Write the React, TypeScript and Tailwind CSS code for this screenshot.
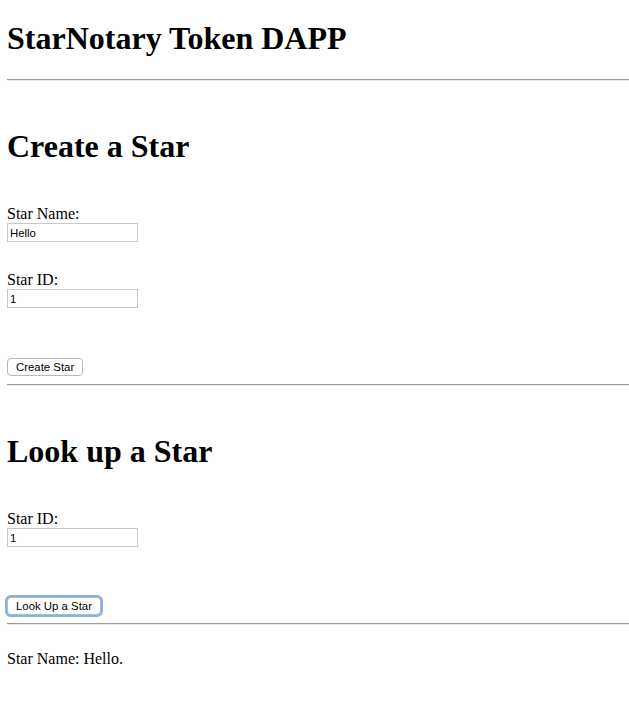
import React from "react";

function Rule({ mt }: { mt: string }) {
  return <div className={`${mt} h-[2px] border-t border-t-[#9a9a9a] border-b border-b-[#ececec]`} />;
}

export default function App() {
  const inputCls =
    "block w-[131px] h-[19px] border border-[#c8c8c8] bg-white px-[2px] text-[11.4px] leading-[17px] text-black font-['Liberation_Sans',Arial,sans-serif] outline-none";
  const btnCls =
    "block h-[18px] rounded-[4px] border border-[#b8b8b8] bg-white px-[8px] text-[11.4px] leading-[16px] text-black font-['Liberation_Sans',Arial,sans-serif]";
  return (
    <div className="min-h-[719px] w-[629px] bg-white text-black font-['Liberation_Serif','Times_New_Roman',serif] pl-[7px] overflow-hidden">
      <h1 className="mt-[20px] text-[32px] leading-[37px] font-bold">StarNotary Token DAPP</h1>
      <Rule mt="mt-[22px]" />

      <h2 className="mt-[47px] text-[32px] leading-[37px] font-bold">Create a Star</h2>
      <div className="mt-[40px] text-[16px] leading-[18px]">Star Name:</div>
      <input className={inputCls} defaultValue="Hello" />
      <div className="mt-[29px] text-[16px] leading-[18px]">Star ID:</div>
      <input className={inputCls} defaultValue="1" />
      <button className={`mt-[50px] ${btnCls}`}>Create Star</button>
      <Rule mt="mt-[8px]" />

      <h2 className="mt-[47px] text-[32px] leading-[37px] font-bold">Look up a Star</h2>
      <div className="mt-[40px] text-[16px] leading-[18px]">Star ID:</div>
      <input className={inputCls} defaultValue="1" />
      <button className={`mt-[50px] ${btnCls} border-[#a9c9f3] shadow-[0_0_0_2px_#7fb2f2]`}>Look Up a Star</button>
      <Rule mt="mt-[8px]" />

      <p className="mt-[25px] text-[16px] leading-[18px]">Star Name: Hello.</p>
    </div>
  );
}
